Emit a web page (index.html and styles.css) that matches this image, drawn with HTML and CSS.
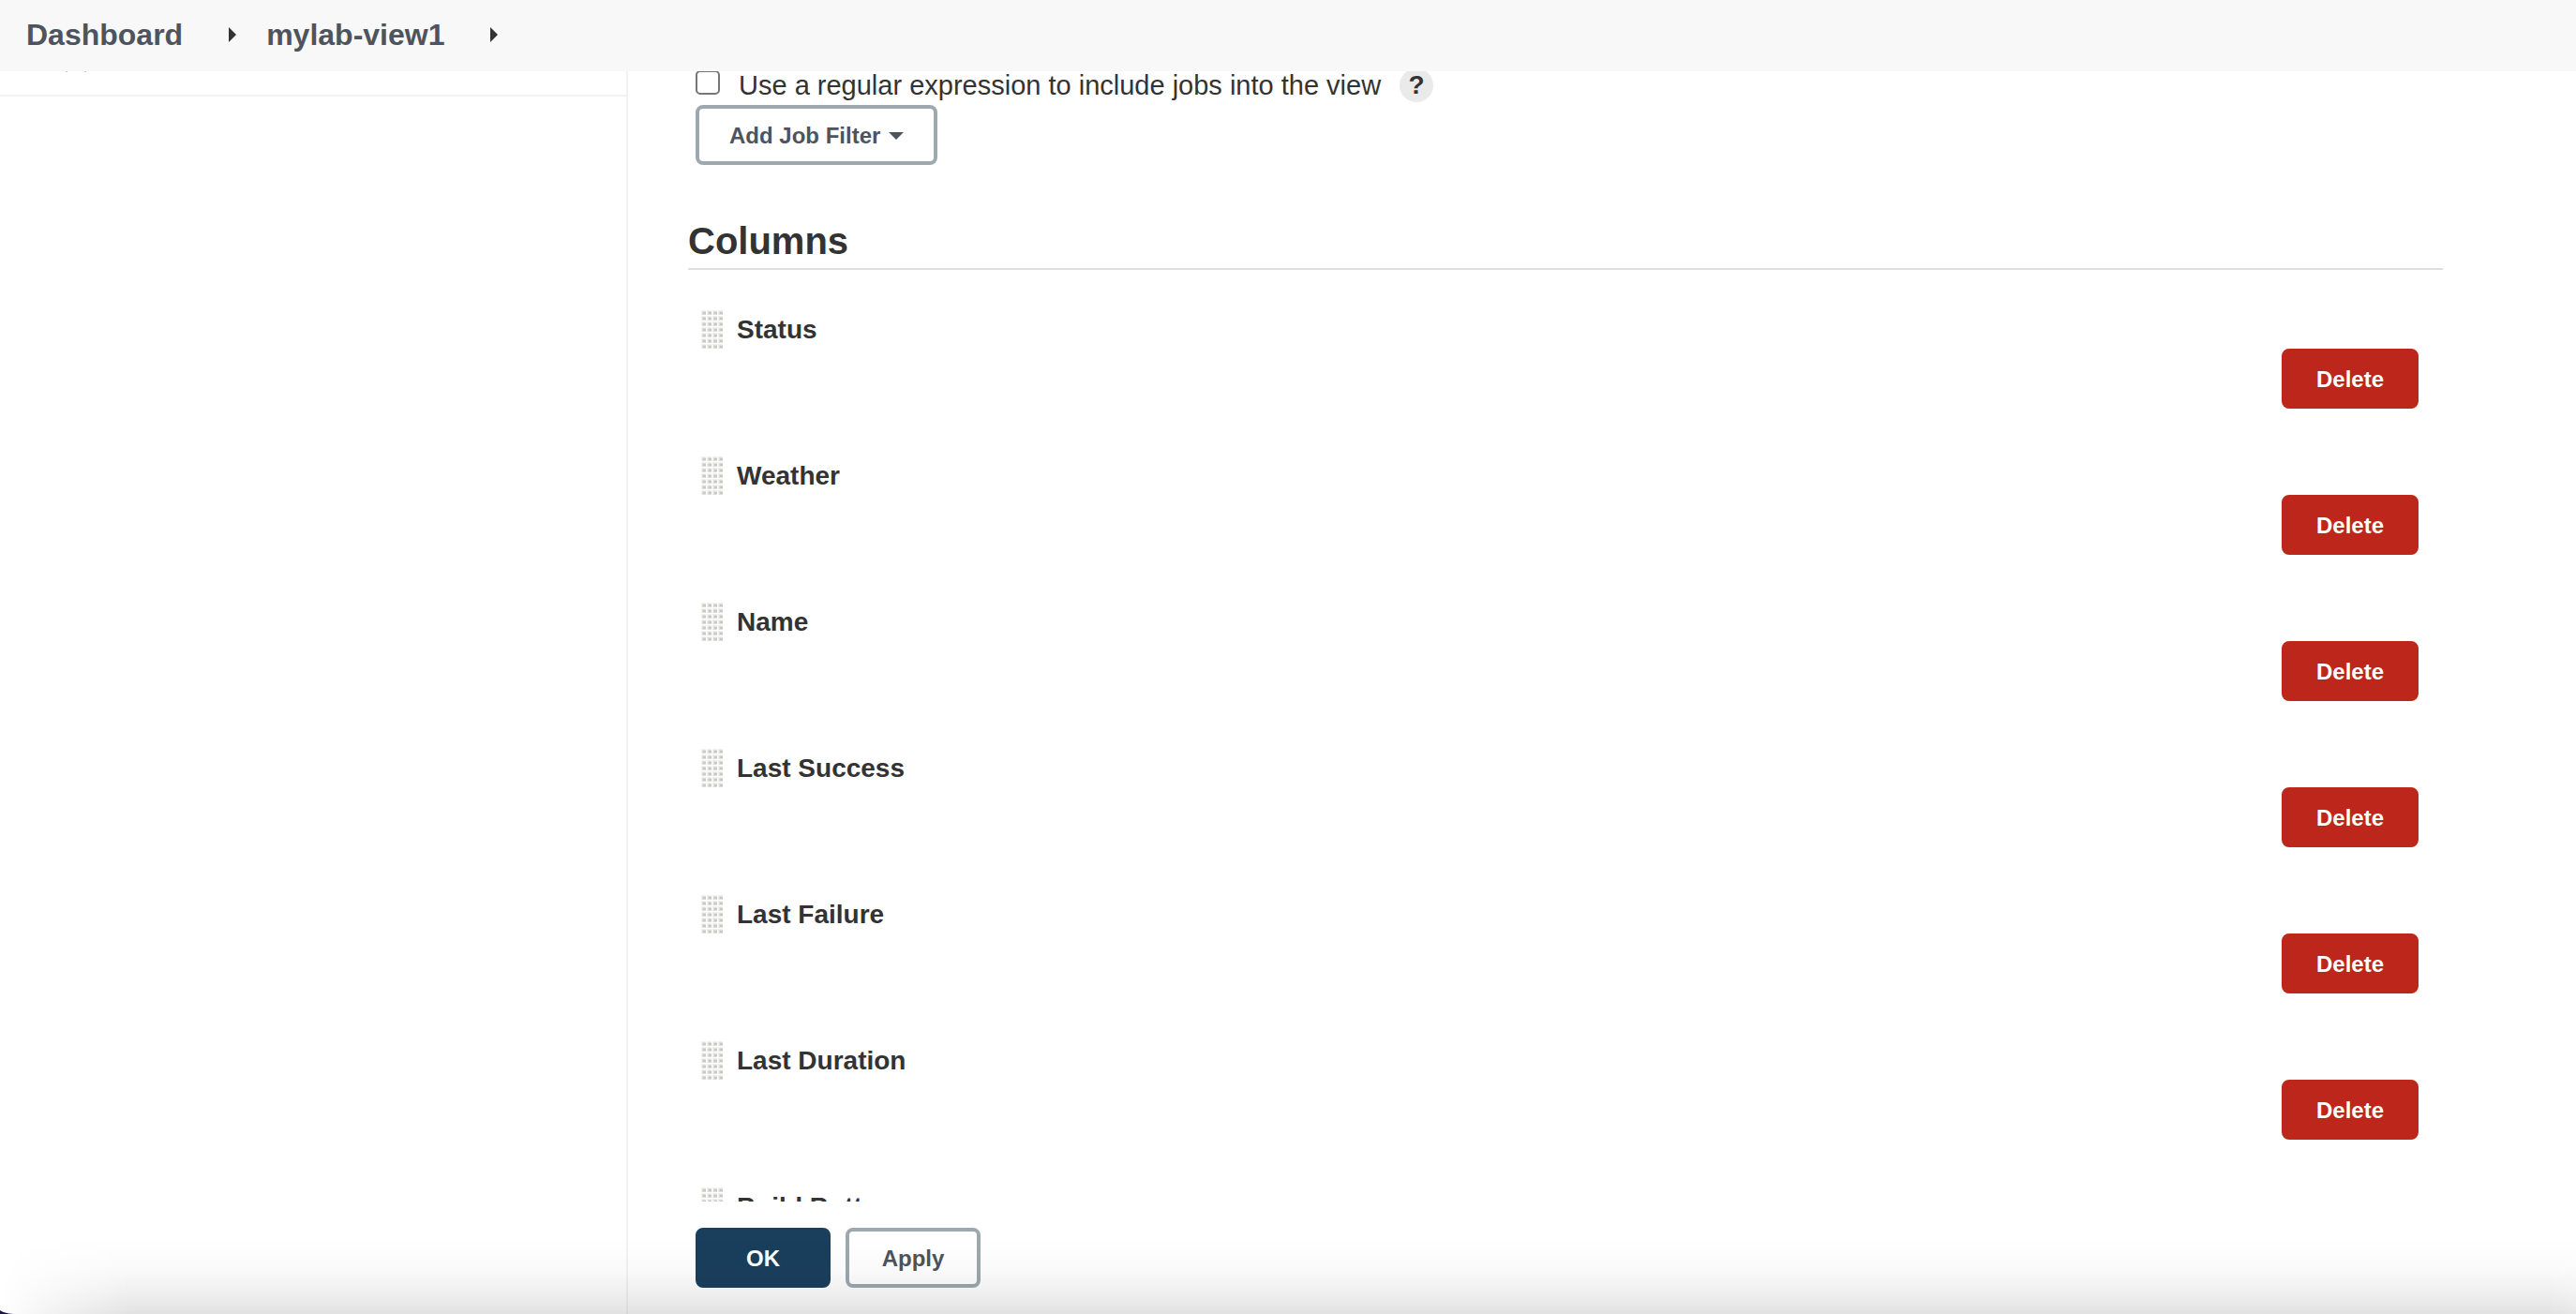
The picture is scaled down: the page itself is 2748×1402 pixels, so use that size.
FILE: index.html
```html
<!DOCTYPE html>
<html lang="en">
<head>
<meta charset="utf-8">
<title>mylab-view1 [Jenkins]</title>
<link rel="stylesheet" href="styles.css">
</head>
<body>
<svg class="defs" aria-hidden="true">
  <defs>
    <pattern id="grip" width="6" height="6" patternUnits="userSpaceOnUse">
      <rect x="0" y="1" width="5" height="5" fill="#f0f0ee"/>
      <rect x="1" y="2" width="4" height="4" fill="#dfdfdd"/>
      <rect x="2" y="3" width="3" height="2" fill="#c8c8c5"/>
    </pattern>
    <symbol id="handle" viewBox="0 0 24 42"><rect width="24" height="42" fill="url(#grip)"/></symbol>
  </defs>
</svg>
<header class="breadcrumbs">
  <a href="#">Dashboard</a>
  <svg class="arrow" viewBox="0 0 8 16" aria-hidden="true"><path d="M0 0L8 8L0 16Z"/></svg>
  <a href="#">mylab-view1</a>
  <svg class="arrow" viewBox="0 0 8 16" aria-hidden="true"><path d="M0 0L8 8L0 16Z"/></svg>
</header>
<div class="page">
  <aside class="side-panel"><div class="side-section"></div></aside>
  <main class="main-panel">
    <div class="scroller">
      <div class="regex-row">
        <label class="check"><input type="checkbox"><span>Use a regular expression to include jobs into the view</span></label>
        <button class="help" type="button" aria-label="Help">?</button>
      </div>
      <button class="btn btn-outline btn-filter" type="button">Add Job Filter
        <svg class="caret" viewBox="0 0 16 8" aria-hidden="true"><path d="M0 0H16L8 8Z"/></svg>
      </button>
      <h2 class="section-title">Columns</h2>
      <ul class="columns">
        <li class="column"><svg class="handle"><use href="#handle"/></svg><b>Status</b><button class="btn btn-danger" type="button">Delete</button></li>
        <li class="column"><svg class="handle"><use href="#handle"/></svg><b>Weather</b><button class="btn btn-danger" type="button">Delete</button></li>
        <li class="column"><svg class="handle"><use href="#handle"/></svg><b>Name</b><button class="btn btn-danger" type="button">Delete</button></li>
        <li class="column"><svg class="handle"><use href="#handle"/></svg><b>Last Success</b><button class="btn btn-danger" type="button">Delete</button></li>
        <li class="column"><svg class="handle"><use href="#handle"/></svg><b>Last Failure</b><button class="btn btn-danger" type="button">Delete</button></li>
        <li class="column"><svg class="handle"><use href="#handle"/></svg><b>Last Duration</b><button class="btn btn-danger" type="button">Delete</button></li>
        <li class="column"><svg class="handle"><use href="#handle"/></svg><b>Build Button</b></li>
      </ul>
    </div>
    <div class="actions">
      <button class="btn btn-primary" type="submit">OK</button>
      <button class="btn btn-outline" type="button">Apply</button>
    </div>
  </main>
</div>
<div class="edge-shade"></div>
<svg class="corner" viewBox="0 0 14 4" aria-hidden="true"><path d="M0 0Q4 3 14 4H0Z"/></svg>
</body>
</html>
```

FILE: styles.css
```css
* { box-sizing: border-box; }

body {
  display: flex;
  flex-direction: column;
  height: 100vh;
  margin: 0;
  overflow: hidden;
  background: #fff;
  color: #333;
  font: 28px/44px "Liberation Sans", Arial, sans-serif;
}

.defs { position: absolute; width: 0; height: 0; }

.breadcrumbs {
  display: flex;
  flex: none;
  align-items: center;
  height: 76px;
  padding: 0 28px 3px;
  background: #f8f8f8;
  font-size: 32px;
  font-weight: bold;
}
.breadcrumbs a { color: #4d545d; text-decoration: none; }
.arrow { width: 8px; height: 16px; margin: 0 32px 0 49px; fill: #333; }

.page { display: flex; flex: 1; min-height: 0; }

.side-panel { flex: none; width: 668px; }
.side-section {
  height: 27px;
  border-bottom: 2px solid #f2f2f2;
  background:
    linear-gradient(#ccc, #ccc) 70px 0 / 2px 1px no-repeat,
    linear-gradient(#ccc, #ccc) 90px 0 / 2px 1px no-repeat;
}

.main-panel {
  display: flex;
  flex: 1;
  flex-direction: column;
  min-width: 0;
  border-left: 2px solid #f2f2f2;
}
.scroller { flex: 1; min-height: 0; overflow: hidden; padding: 0 142px 0 64px; }

.regex-row {
  display: flex;
  align-items: center;
  gap: 20px;
  height: 42px;
  margin: -6px 0 0 8px;
  font-size: 29px;
}
.check { display: flex; align-items: center; gap: 20px; }
.check input {
  appearance: none;
  width: 26px;
  height: 26px;
  margin: 0 0 6px;
  border: 2px solid #767676;
  border-radius: 5px;
  background: #fff;
}
.help {
  width: 36px;
  height: 36px;
  padding: 0;
  border: 0;
  border-radius: 50%;
  background: #eaeaea;
  color: #333;
  font: bold 28px/36px "Liberation Sans", Arial, sans-serif;
}

.btn {
  height: 64px;
  min-width: 144px;
  padding: 2px 32px 0;
  border: 4px solid transparent;
  border-radius: 8px;
  font: bold 24px/54px "Liberation Sans", Arial, sans-serif;
}
.btn-outline { border-color: #9da8af; background: transparent; color: #4d545d; }
.btn-primary { border-color: #1a3f5d; background: #1a3f5d; color: #fff; }
.btn-danger { min-width: 146px; border-color: #bd261b; background: #bd261b; color: #fff; }
.btn-filter { display: flex; align-items: center; gap: 9px; margin-left: 8px; }
.caret { width: 16px; height: 8px; fill: #4d545d; }

.section-title {
  margin: 54px 0 0;
  padding-bottom: 2px;
  border-bottom: 2px solid #dedede;
  font-size: 40px;
  line-height: 54px;
}

.columns { margin: 0; padding: 42px 26px 0 14px; list-style: none; }
.column {
  display: grid;
  grid-template-columns: 24px 1fr;
  column-gap: 14px;
  grid-template-rows: 42px 64px;
  height: 156px;
}
.column .btn { grid-column: 2; justify-self: end; }
.handle { width: 24px; height: 42px; }

.actions { display: flex; flex: none; gap: 16px; height: 120px; padding: 28px 72px; }

.edge-shade {
  position: fixed;
  inset: auto 0 0;
  height: 80px;
  background: linear-gradient(rgba(0, 0, 0, 0), rgba(0, 0, 0, .02) 40%, rgba(0, 0, 0, .06) 70%, rgba(0, 0, 0, .115));
  mask-image: linear-gradient(to right, transparent, rgba(0, 0, 0, .4) 50px, #000 140px, #000 calc(100% - 30px), rgba(0, 0, 0, .8));
  pointer-events: none;
}
.corner { position: fixed; left: 0; bottom: 0; width: 14px; height: 4px; fill: #1d1646; }
```
